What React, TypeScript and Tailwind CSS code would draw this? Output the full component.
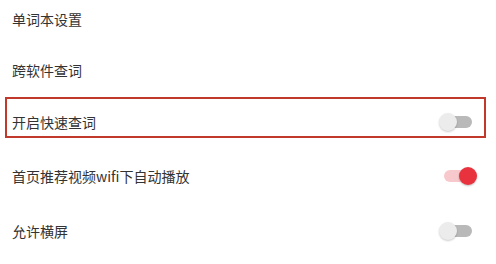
import { useState } from 'react';

const font = { fontFamily: '"Noto Sans CJK SC", "Noto Sans", sans-serif' };

function Toggle({ on, onChange }: { on: boolean; onChange: () => void }) {
    return (
        <button type="button" onClick={onChange} className="relative h-[18px] w-[38px] shrink-0">
            <span className={on ? 'absolute left-[5px] top-[3px] h-[12px] w-[28px] rounded-full bg-[#f8c9cc]' : 'absolute left-[5px] top-[3px] h-[12px] w-[28px] rounded-full bg-[#b9b9b9]'} />
            <span className={on ? 'absolute right-0 top-0 size-[18px] rounded-full bg-[#e8333f] shadow-[0_1px_2px_rgba(0,0,0,0.25)]' : 'absolute left-0 top-0 size-[18px] rounded-full bg-[#ececec] shadow-[0_1px_2px_rgba(0,0,0,0.2)]'} />
        </button>
    );
}

export default function App() {
    const [quick, setQuick] = useState(false);
    const [autoplay, setAutoplay] = useState(true);
    const [landscape, setLandscape] = useState(false);

    return (
        <div className="relative h-[264px] w-[496px] overflow-hidden bg-white text-[14px] text-[#333]" style={font}>
            <div className="flex flex-col">
                <div className="flex h-[38px] items-center pl-3">单词本设置</div>
                <div className="flex h-[64px] items-center pl-3">跨软件查词</div>
                <div className="flex h-[40px] items-center justify-between pl-3 pr-[19px]">
                    <span>开启快速查词</span>
                    <Toggle on={quick} onChange={() => setQuick(!quick)} />
                </div>
                <div className="flex h-[68px] items-center justify-between pl-3 pr-[19px]">
                    <span>首页推荐视频wifi下自动播放</span>
                    <Toggle on={autoplay} onChange={() => setAutoplay(!autoplay)} />
                </div>
                <div className="flex h-[42px] items-center justify-between pl-3 pr-[19px]">
                    <span>允许横屏</span>
                    <Toggle on={landscape} onChange={() => setLandscape(!landscape)} />
                </div>
            </div>
            {/* highlight box around the quick lookup row */}
            <div className="pointer-events-none absolute left-[5px] top-[97px] h-[41px] w-[481px] border-2 border-[#c0392b]" />
        </div>
    );
}
